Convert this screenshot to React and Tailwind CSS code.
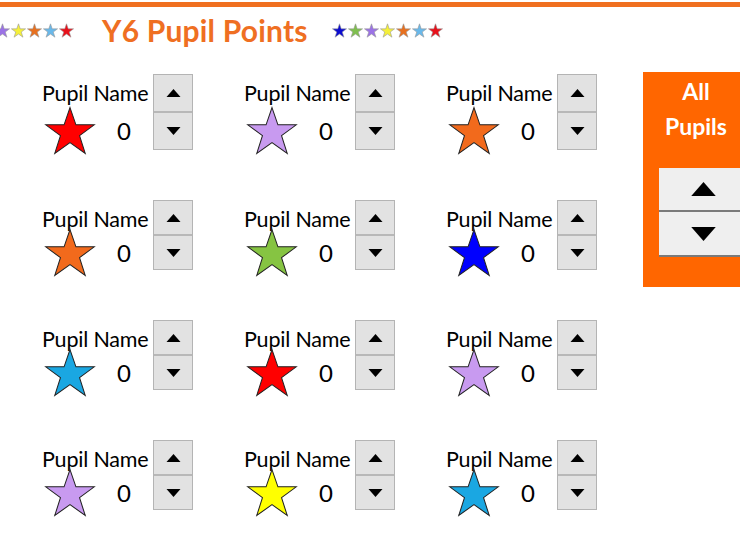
import React from "react";

const STAR_PTS =
  "50,3 61.5,36.5 97,36.5 68.5,57.5 79.5,92 50,71 20.5,92 31.5,57.5 3,36.5 38.5,36.5";

function Star({ color, className, stroke = "#222", sw = 2 }) {
  return (
    <svg viewBox="0 0 100 95" className={className}>
      <polygon points={STAR_PTS} fill={color} stroke={stroke} strokeWidth={sw} strokeLinejoin="miter" />
    </svg>
  );
}

function Tri({ up, className }) {
  return (
    <svg viewBox="0 0 14 8" className={className}>
      {up ? <polygon points="0,8 14,8 7,0" fill="#000" /> : <polygon points="0,0 14,0 7,8" fill="#000" />}
    </svg>
  );
}

function Spinner({ tall }) {
  return (
    <div
      className={
        "flex flex-col w-[40px] border border-[#b4b4b4] bg-[#e2e2e2] " +
        (tall ? "h-[76px]" : "h-[70px]")
      }
    >
      <div className="flex-1 flex items-center justify-center border-b-2 border-[#b8b8b8]">
        <Tri up className="w-[15px] h-[8px]" />
      </div>
      <div className="flex-1 flex items-center justify-center">
        <Tri className="w-[15px] h-[8px]" />
      </div>
    </div>
  );
}

function Cell({ color, tall }) {
  return (
    <div className="flex items-start h-full">
      <div className="w-[111px] flex flex-col">
        <div className="text-[21.5px] leading-[26px] mt-[6px] text-black tracking-[-0.2px] whitespace-nowrap">
          Pupil Name
        </div>
        <div className={"flex items-center " + (tall ? "" : "mt-[-4px]")}>
          <Star color={color} className="w-[52px] h-[49px] ml-[2px]" sw={2} />
          <span className="ml-[21px] text-[24px] leading-[28px] text-black">0</span>
        </div>
      </div>
      <Spinner tall={tall} />
    </div>
  );
}

const ROWS = [
  ["#ff0000", "#c89af0", "#f26a1c"],
  ["#f26a1c", "#86c442", "#0000ff"],
  ["#1aa7e2", "#ff0000", "#c89af0"],
  ["#c89af0", "#ffff00", "#1aa7e2"],
];

const LEFT_STARS = ["#9b72e6", "#f5f03a", "#e8701e", "#69b8ea", "#e8101a"];
const RIGHT_STARS = ["#0b0bd0", "#7fbf4f", "#9b72e6", "#f5f03a", "#e8701e", "#69b8ea", "#e8101a"];

export default function App() {
  return (
    <div
      className="w-[740px] h-[555px] overflow-hidden bg-white"
      style={{ fontFamily: "'Lato', 'Open Sans', sans-serif" }}
    >
      <div className="h-[2px]" />
      <div className="h-[5px] bg-[#f07020]" />
      <div className="flex items-center h-[46px]">
        <div className="flex items-center ml-[-5px] gap-[1px]">
          {LEFT_STARS.map((c, i) => (
            <Star key={i} color={c} className="w-[15px] h-[15px]" stroke="#999" sw={4} />
          ))}
        </div>
        <div className="ml-[28px] text-[30px] font-bold text-[#ef6f22] tracking-[0.2px] leading-[36px]">
          Y6 Pupil Points
        </div>
        <div className="flex items-center ml-[24px] gap-[1px]">
          {RIGHT_STARS.map((c, i) => (
            <Star key={i} color={c} className="w-[15px] h-[15px]" stroke="#999" sw={4} />
          ))}
        </div>
      </div>
      <div className="flex pt-[19px]">
        <div className="w-[643px] pl-[42px] shrink-0 grid grid-cols-[202px_202px_155px] grid-rows-[76px_70px_70px_70px] gap-y-[50px] mt-[2px] content-start">
          {ROWS.map((row, r) =>
            row.map((c, i) => <Cell key={r + "-" + i} color={c} tall={r === 0} />)
          )}
        </div>
        <div className="w-[120px] shrink-0 h-[215px] bg-[#ff6600] flex flex-col">
          <div className="w-[106px] text-center text-white font-bold text-[23px] leading-[35px] mt-[2px]">
            All
            <br />
            Pupils
          </div>
          <div className="ml-[16px] mt-[24px] w-[88px] flex flex-col bg-[#efefef]">
            <div className="h-[44px] flex items-center justify-center border-b-2 border-[#7a7a7a]">
              <Tri up className="w-[27px] h-[14px]" />
            </div>
            <div className="h-[45px] flex items-center justify-center border-b-2 border-[#7a7a7a]">
              <Tri className="w-[27px] h-[14px]" />
            </div>
          </div>
        </div>
      </div>
    </div>
  );
}
